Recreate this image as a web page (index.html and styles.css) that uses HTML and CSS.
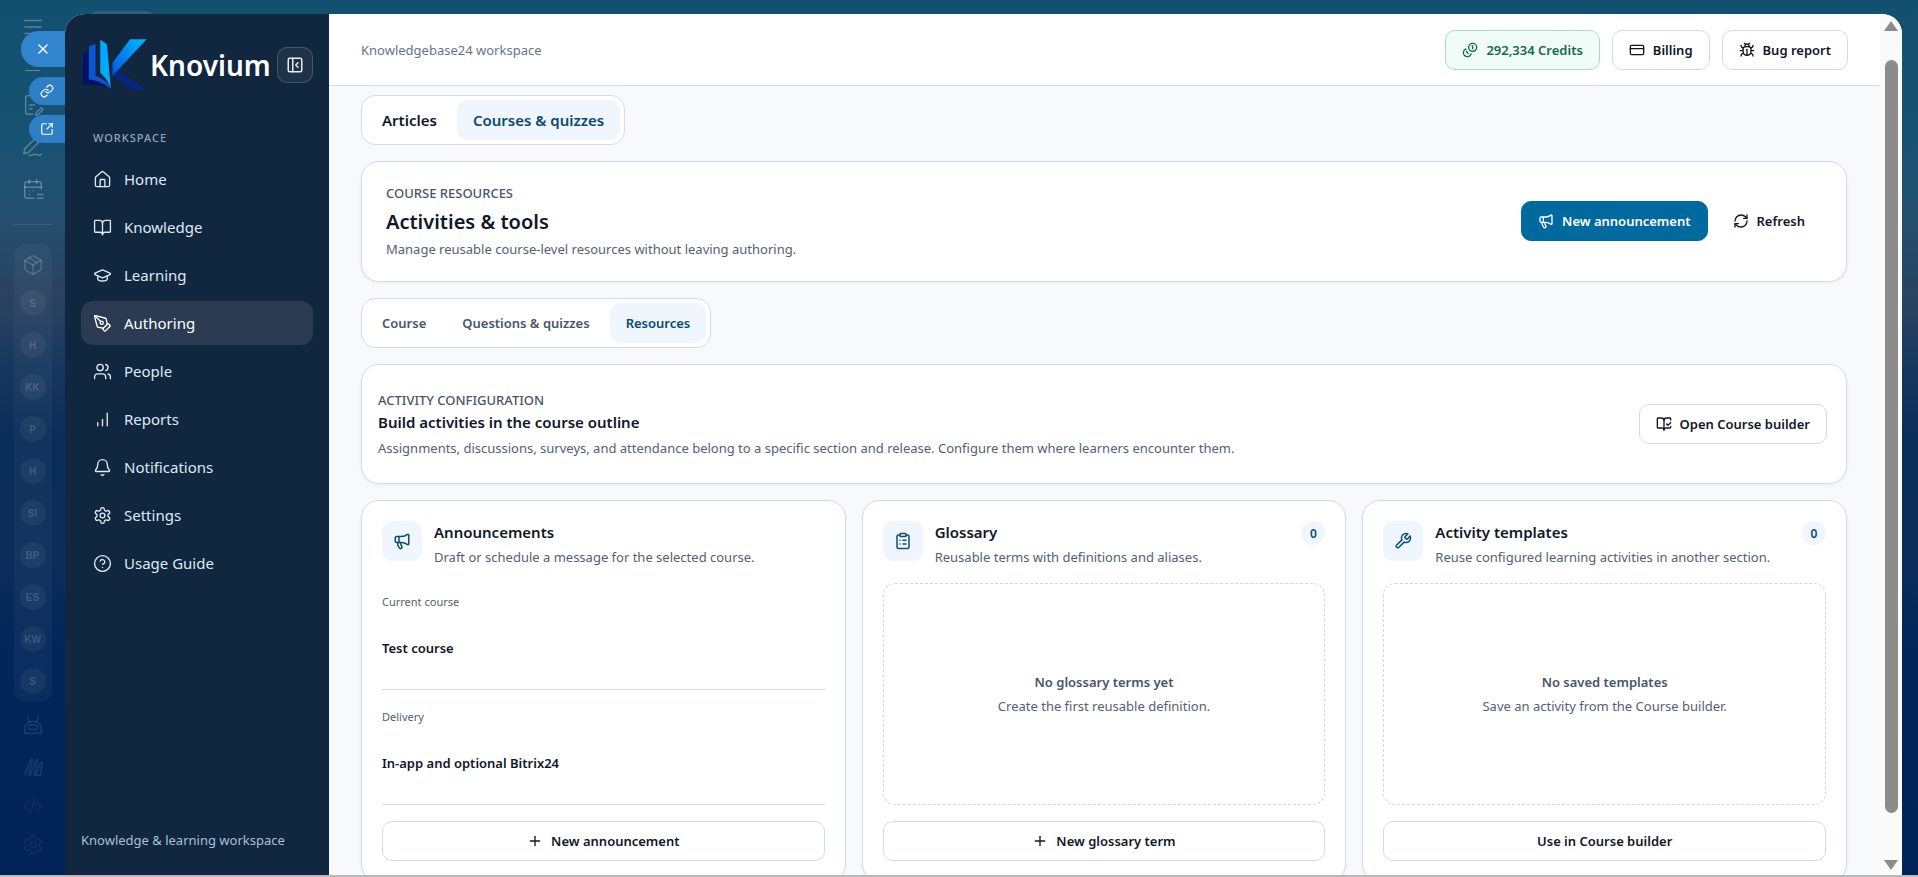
FILE: index.html
```html
<!DOCTYPE html>
<html lang="en">
  <head>
    <meta charset="UTF-8" />
    <meta name="viewport" content="width=device-width, initial-scale=1.0" />
    <title>Knovium - Activities &amp; tools</title>
    <link rel="stylesheet" href="styles.css">
  </head>
  <body>
    <!-- Icon sprite -->
    <svg class="sprite" xmlns="http://www.w3.org/2000/svg">
      <symbol id="i-home" viewBox="0 0 24 24"><path d="M15 21v-8a1 1 0 0 0-1-1h-4a1 1 0 0 0-1 1v8"/><path d="M3 10a2 2 0 0 1 .709-1.528l7-5.999a2 2 0 0 1 2.582 0l7 5.999A2 2 0 0 1 21 10v9a2 2 0 0 1-2 2H5a2 2 0 0 1-2-2z"/></symbol>
      <symbol id="i-book" viewBox="0 0 24 24"><path d="M12 7v14"/><path d="M3 18a1 1 0 0 1-1-1V4a1 1 0 0 1 1-1h5a4 4 0 0 1 4 4 4 4 0 0 1 4-4h5a1 1 0 0 1 1 1v13a1 1 0 0 1-1 1h-6a3 3 0 0 0-3 3 3 3 0 0 0-3-3z"/></symbol>
      <symbol id="i-cap" viewBox="0 0 24 24"><path d="M21.42 10.922a1 1 0 0 0-.019-1.838L12.83 5.18a2 2 0 0 0-1.66 0L2.6 9.08a1 1 0 0 0 0 1.832l8.57 3.908a2 2 0 0 0 1.66 0z"/><path d="M6 12.5V16a6 3 0 0 0 12 0v-3.5"/></symbol>
      <symbol id="i-pen" viewBox="0 0 24 24"><path d="M15.707 21.293a1 1 0 0 1-1.414 0l-1.586-1.586a1 1 0 0 1 0-1.414l5.586-5.586a1 1 0 0 1 1.414 0l1.586 1.586a1 1 0 0 1 0 1.414z"/><path d="m18 13-1.375-6.874a1 1 0 0 0-.746-.776L3.235 2.028a1 1 0 0 0-1.207 1.207L5.35 15.879a1 1 0 0 0 .776.746L13 18"/><path d="m2.3 2.3 7.286 7.286"/><circle cx="11" cy="11" r="2"/></symbol>
      <symbol id="i-users" viewBox="0 0 24 24"><path d="M16 21v-2a4 4 0 0 0-4-4H6a4 4 0 0 0-4 4v2"/><path d="M16 3.128a4 4 0 0 1 0 7.744"/><path d="M22 21v-2a4 4 0 0 0-3-3.87"/><circle cx="9" cy="7" r="4"/></symbol>
      <symbol id="i-bars" viewBox="0 0 24 24"><path d="M6 20v-4"/><path d="M12 20v-8"/><path d="M18 20V4"/></symbol>
      <symbol id="i-bell" viewBox="0 0 24 24"><path d="M10.268 21a2 2 0 0 0 3.464 0"/><path d="M3.262 15.326A1 1 0 0 0 4 17h16a1 1 0 0 0 .74-1.673C19.41 13.956 18 12.499 18 8A6 6 0 0 0 6 8c0 4.499-1.411 5.956-2.738 7.326"/></symbol>
      <symbol id="i-gear" viewBox="0 0 24 24"><path d="M12.22 2h-.44a2 2 0 0 0-2 2v.18a2 2 0 0 1-1 1.73l-.43.25a2 2 0 0 1-2 0l-.15-.08a2 2 0 0 0-2.73.73l-.22.38a2 2 0 0 0 .73 2.73l.15.1a2 2 0 0 1 1 1.72v.51a2 2 0 0 1-1 1.74l-.15.09a2 2 0 0 0-.73 2.73l.22.38a2 2 0 0 0 2.73.73l.15-.08a2 2 0 0 1 2 0l.43.25a2 2 0 0 1 1 1.73V20a2 2 0 0 0 2 2h.44a2 2 0 0 0 2-2v-.18a2 2 0 0 1 1-1.73l.43-.25a2 2 0 0 1 2 0l.15.08a2 2 0 0 0 2.73-.73l.22-.39a2 2 0 0 0-.73-2.73l-.15-.08a2 2 0 0 1-1-1.74v-.5a2 2 0 0 1 1-1.74l.15-.09a2 2 0 0 0 .73-2.73l-.22-.38a2 2 0 0 0-2.73-.73l-.15.08a2 2 0 0 1-2 0l-.43-.25a2 2 0 0 1-1-1.73V4a2 2 0 0 0-2-2z"/><circle cx="12" cy="12" r="3"/></symbol>
      <symbol id="i-help" viewBox="0 0 24 24"><circle cx="12" cy="12" r="10"/><path d="M9.09 9a3 3 0 0 1 5.83 1c0 2-3 3-3 3"/><path d="M12 17h.01"/></symbol>
      <symbol id="i-panel" viewBox="0 0 24 24"><rect width="18" height="18" x="3" y="3" rx="2"/><path d="M9 3v18"/><path d="m16 15-3-3 3-3"/></symbol>
      <symbol id="i-coins" viewBox="0 0 24 24"><circle cx="16" cy="8" r="6"/><path d="M5.91 10.37A6 6 0 1 0 13.66 18"/><path d="M15 6h1v4"/><path d="m7.29 13.88-.7.71 2.82 2.82"/></symbol>
      <symbol id="i-card" viewBox="0 0 24 24"><rect width="20" height="14" x="2" y="5" rx="2"/><path d="M2 10h20"/></symbol>
      <symbol id="i-bug" viewBox="0 0 24 24"><path d="m8 2 1.88 1.88"/><path d="M14.12 3.88 16 2"/><path d="M9 7.13v-1a3.003 3.003 0 1 1 6 0v1"/><path d="M12 20c-3.3 0-6-2.7-6-6v-3a4 4 0 0 1 4-4h4a4 4 0 0 1 4 4v3c0 3.3-2.7 6-6 6"/><path d="M12 20v-9"/><path d="M6.53 9C4.6 8.8 3 7.1 3 5"/><path d="M6 13H2"/><path d="M3 21c0-2.1 1.7-3.9 3.8-4"/><path d="M20.97 5c0 2.1-1.6 3.8-3.5 4"/><path d="M22 13h-4"/><path d="M17.2 17c2.1.1 3.8 1.9 3.8 4"/></symbol>
      <symbol id="i-mega" viewBox="0 0 24 24"><path d="M11 6a13 13 0 0 0 8.4-2.8A1 1 0 0 1 21 4v12a1 1 0 0 1-1.6.8A13 13 0 0 0 11 14H5a2 2 0 0 1-2-2V8a2 2 0 0 1 2-2z"/><path d="M6 14a12 12 0 0 0 2.4 7.2 2 2 0 0 0 3.2-2.4A8 8 0 0 1 10 14"/><path d="M8 6v8"/></symbol>
      <symbol id="i-refresh" viewBox="0 0 24 24"><path d="M3 12a9 9 0 0 1 9-9 9.75 9.75 0 0 1 6.74 2.74L21 8"/><path d="M21 3v5h-5"/><path d="M21 12a9 9 0 0 1-9 9 9.75 9.75 0 0 1-6.74-2.74L3 16"/><path d="M8 16H3v5"/></symbol>
      <symbol id="i-bookcheck" viewBox="0 0 24 24"><path d="M12 21V7"/><path d="m16 12 2 2 4-4"/><path d="M22 6V4a1 1 0 0 0-1-1h-5a4 4 0 0 0-4 4 4 4 0 0 0-4-4H3a1 1 0 0 0-1 1v13a1 1 0 0 0 1 1h6a3 3 0 0 1 3 3 3 3 0 0 1 3-3h6a1 1 0 0 0 1-1v-1.3"/></symbol>
      <symbol id="i-clip" viewBox="0 0 24 24"><rect width="8" height="4" x="8" y="2" rx="1"/><path d="M16 4h2a2 2 0 0 1 2 2v14a2 2 0 0 1-2 2H6a2 2 0 0 1-2-2V6a2 2 0 0 1 2-2h2"/><path d="M12 11h4"/><path d="M12 16h4"/><path d="M8 11h.01"/><path d="M8 16h.01"/></symbol>
      <symbol id="i-wrench" viewBox="0 0 24 24"><path d="M14.7 6.3a1 1 0 0 0 0 1.4l1.6 1.6a1 1 0 0 0 1.4 0l3.77-3.77a6 6 0 0 1-7.94 7.94l-6.91 6.91a2.12 2.12 0 0 1-3-3l6.91-6.91a6 6 0 0 1 7.94-7.94l-3.76 3.76z"/></symbol>
      <symbol id="i-plus" viewBox="0 0 24 24"><path d="M5 12h14"/><path d="M12 5v14"/></symbol>
      <symbol id="i-x" viewBox="0 0 24 24"><path d="M18 6 6 18"/><path d="m6 6 12 12"/></symbol>
      <symbol id="i-link" viewBox="0 0 24 24"><path d="M10 13a5 5 0 0 0 7.54.54l3-3a5 5 0 0 0-7.07-7.07l-1.72 1.71"/><path d="M14 11a5 5 0 0 0-7.54-.54l-3 3a5 5 0 0 0 7.07 7.07l1.71-1.71"/></symbol>
      <symbol id="i-open" viewBox="0 0 24 24"><path d="M21 13v6a2 2 0 0 1-2 2H5a2 2 0 0 1-2-2V5a2 2 0 0 1 2-2h6"/><path d="m21 3-9 9"/><path d="M15 3h6v6"/></symbol>
      <symbol id="i-menu" viewBox="0 0 24 24"><path d="M3 5h18"/><path d="M3 12h18"/><path d="M3 19h18"/></symbol>
      <symbol id="i-file" viewBox="0 0 24 24"><path d="M12 22H6a2 2 0 0 1-2-2V4a2 2 0 0 1 2-2h8l5 5v4"/><path d="M8 12h6"/><path d="M8 16h3"/><path d="m15 21 6-6 2 2-6 6h-2z"/></symbol>
      <symbol id="i-sign" viewBox="0 0 24 24"><path d="m14 3 4 4L7 18l-5 1 1-5z"/><path d="M8 21c3 1 4-2 7-1s3 2 6 0"/></symbol>
      <symbol id="i-cal" viewBox="0 0 24 24"><path d="M8 2v4"/><path d="M16 2v4"/><path d="M21 12V6a2 2 0 0 0-2-2H5a2 2 0 0 0-2 2v14a2 2 0 0 0 2 2h8"/><path d="M3 10h18"/><path d="M8 14h.01"/><path d="M12 14h.01"/><path d="M8 18h.01"/><path d="M17 18h6"/><path d="M17 22h6"/></symbol>
      <symbol id="i-box" viewBox="0 0 24 24"><path d="M21 8a2 2 0 0 0-1-1.73l-7-4a2 2 0 0 0-2 0l-7 4A2 2 0 0 0 3 8v8a2 2 0 0 0 1 1.73l7 4a2 2 0 0 0 2 0l7-4a2 2 0 0 0 1-1.73z"/><path d="m3.3 7 8.7 5 8.7-5"/><path d="M12 22V12"/><path d="m7.5 4.3 9 5.2"/></symbol>
      <symbol id="i-robot" viewBox="0 0 24 24"><path d="M6 3l2 5"/><path d="M18 3l-2 5"/><path d="M3 21v-5a9 8 0 0 1 18 0v5z"/><rect x="7" y="12" width="10" height="5" rx="2.5"/></symbol>
      <symbol id="i-brush" viewBox="0 0 24 24"><path d="M3 21 9 5c1-2 3-1 2 1L7 21"/><path d="M9 21l6-16c1-2 3-1 2 1l-4 15"/><path d="M15 21l5-13c1-2 2-1 2 1l-2 12z"/></symbol>
      <symbol id="i-code" viewBox="0 0 24 24"><path d="m8 8-5 5 5 5"/><path d="m16 8 5 5-5 5"/><path d="m14 4-4 16"/></symbol>
    </svg>

    <div class="stage">
      <!-- Desktop rail behind the window -->
      <div class="rail">
        <svg class="rail-icon rail-menu"><use href="#i-menu"/></svg>
        <div class="rail-line"></div>
        <svg class="rail-icon rail-file"><use href="#i-file"/></svg>
        <svg class="rail-icon"><use href="#i-sign"/></svg>
        <svg class="rail-icon"><use href="#i-cal"/></svg>
        <div class="rail-line rail-line-wide"></div>
        <div class="rail-group">
          <svg class="rail-icon"><use href="#i-box"/></svg>
          <span class="avatar">S</span>
          <span class="avatar">H</span>
          <span class="avatar">KK</span>
          <span class="avatar">P</span>
          <span class="avatar">H</span>
          <span class="avatar">SI</span>
          <span class="avatar">BP</span>
          <span class="avatar">ES</span>
          <span class="avatar">KW</span>
          <span class="avatar">S</span>
        </div>
        <svg class="rail-icon rail-dim"><use href="#i-robot"/></svg>
        <svg class="rail-icon rail-dim"><use href="#i-brush"/></svg>
        <svg class="rail-icon rail-dimmer"><use href="#i-code"/></svg>
        <svg class="rail-icon rail-dimmer"><use href="#i-gear"/></svg>
      </div>

      <!-- Floating widget buttons -->
      <div class="float-btn float-close"><svg class="icon icon-white"><use href="#i-x"/></svg></div>
      <div class="float-btn float-link"><svg class="icon icon-white"><use href="#i-link"/></svg></div>
      <div class="float-btn float-open"><svg class="icon icon-white"><use href="#i-open"/></svg></div>
      <div class="peek-tab"></div>

      <div class="window">
        <!-- Sidebar -->
        <aside class="sidebar">
          <div class="brand">
            <svg class="logo" viewBox="20 28 196 154">
              <defs>
                <linearGradient id="kArm" x1="1" y1="0" x2="0" y2="1">
                  <stop offset="0" stop-color="#00bbff" />
                  <stop offset="1" stop-color="#0057e0" />
                </linearGradient>
              </defs>
              <path fill="#05106b" d="M23 70l15-4v84c20 4 45 10 67 28-25-10-55-13-82-13z" />
              <path fill="#0a56d6" d="M41 50l20-7v97c20 6 38 20 46 38-18-16-42-26-66-28z" />
              <path fill="#00aaff" d="M75 30l20 14c4 40 8 90 12 134-6-20-18-36-32-48z" />
              <path fill="url(#kArm)" d="M112 100l53-71h50L112 140z" />
              <path fill="#07277f" d="M127 122l88 59h-43l-60-41z" />
            </svg>
            <span class="brand-name">Knovium</span>
            <div class="collapse-btn"><svg class="icon"><use href="#i-panel"/></svg></div>
          </div>

          <div class="nav-label">WORKSPACE</div>
          <nav class="nav">
            <a class="nav-item"><svg class="nav-icon"><use href="#i-home"/></svg>Home</a>
            <a class="nav-item"><svg class="nav-icon"><use href="#i-book"/></svg>Knowledge</a>
            <a class="nav-item"><svg class="nav-icon"><use href="#i-cap"/></svg>Learning</a>
            <a class="nav-item active"><svg class="nav-icon"><use href="#i-pen"/></svg>Authoring</a>
            <a class="nav-item"><svg class="nav-icon"><use href="#i-users"/></svg>People</a>
            <a class="nav-item"><svg class="nav-icon"><use href="#i-bars"/></svg>Reports</a>
            <a class="nav-item"><svg class="nav-icon"><use href="#i-bell"/></svg>Notifications</a>
            <a class="nav-item"><svg class="nav-icon"><use href="#i-gear"/></svg>Settings</a>
            <a class="nav-item"><svg class="nav-icon"><use href="#i-help"/></svg>Usage Guide</a>
          </nav>
          <div class="sidebar-foot">Knowledge &amp; learning workspace</div>
        </aside>

        <!-- Main column -->
        <main class="main">
          <header class="topbar">
            <span class="workspace-name">Knowledgebase24 workspace</span>
            <div class="topbar-actions">
              <button class="btn btn-credits"><svg class="icon"><use href="#i-coins"/></svg>292,334 Credits</button>
              <button class="btn"><svg class="icon"><use href="#i-card"/></svg>Billing</button>
              <button class="btn"><svg class="icon"><use href="#i-bug"/></svg>Bug report</button>
            </div>
          </header>

          <div class="content">
            <div class="tabs tabs-large">
              <span class="tab strong">Articles</span>
              <span class="tab active">Courses &amp; quizzes</span>
            </div>

            <section class="panel hero">
              <div>
                <div class="eyebrow">COURSE RESOURCES</div>
                <h1 class="hero-title">Activities &amp; tools</h1>
                <p class="muted hero-sub">Manage reusable course-level resources without leaving authoring.</p>
              </div>
              <div class="hero-actions">
                <button class="btn btn-primary"><svg class="icon"><use href="#i-mega"/></svg>New announcement</button>
                <button class="btn btn-ghost"><svg class="icon"><use href="#i-refresh"/></svg>Refresh</button>
              </div>
            </section>

            <div class="tabs">
              <span class="tab">Course</span>
              <span class="tab">Questions &amp; quizzes</span>
              <span class="tab active">Resources</span>
            </div>

            <section class="panel config">
              <div>
                <div class="eyebrow">ACTIVITY CONFIGURATION</div>
                <h2 class="config-title">Build activities in the course outline</h2>
                <p class="muted config-sub">Assignments, discussions, surveys, and attendance belong to a specific section and release. Configure them where learners encounter them.</p>
              </div>
              <button class="btn"><svg class="icon"><use href="#i-bookcheck"/></svg>Open Course builder</button>
            </section>

            <div class="card-grid">
              <section class="panel card">
                <div class="card-head">
                  <div class="card-icon"><svg class="icon icon-tile"><use href="#i-mega"/></svg></div>
                  <div>
                    <h3 class="card-title">Announcements</h3>
                    <p class="muted card-sub">Draft or schedule a message for the selected course.</p>
                  </div>
                </div>
                <div class="field">
                  <div class="field-label">Current course</div>
                  <div class="field-value">Test course</div>
                </div>
                <div class="field">
                  <div class="field-label">Delivery</div>
                  <div class="field-value">In-app and optional Bitrix24</div>
                </div>
                <button class="btn btn-wide"><svg class="icon"><use href="#i-plus"/></svg>New announcement</button>
              </section>

              <section class="panel card">
                <div class="card-head">
                  <div class="card-icon"><svg class="icon icon-tile"><use href="#i-clip"/></svg></div>
                  <div>
                    <h3 class="card-title">Glossary</h3>
                    <p class="muted card-sub">Reusable terms with definitions and aliases.</p>
                  </div>
                  <span class="count">0</span>
                </div>
                <div class="empty">
                  <strong>No glossary terms yet</strong>
                  <span>Create the first reusable definition.</span>
                </div>
                <button class="btn btn-wide"><svg class="icon"><use href="#i-plus"/></svg>New glossary term</button>
              </section>

              <section class="panel card">
                <div class="card-head">
                  <div class="card-icon"><svg class="icon icon-tile"><use href="#i-wrench"/></svg></div>
                  <div>
                    <h3 class="card-title">Activity templates</h3>
                    <p class="muted card-sub">Reuse configured learning activities in another section.</p>
                  </div>
                  <span class="count">0</span>
                </div>
                <div class="empty">
                  <strong>No saved templates</strong>
                  <span>Save an activity from the Course builder.</span>
                </div>
                <button class="btn btn-wide">Use in Course builder</button>
              </section>
            </div>
          </div>
        </main>

        <!-- Page scrollbar -->
        <div class="scrollbar">
          <span class="arrow arrow-up"></span>
          <span class="thumb"></span>
          <span class="arrow arrow-down"></span>
        </div>
      </div>
    </div>
    <div class="screen-edge"></div>
  </body>
</html>
```

FILE: styles.css
```css
* {
  box-sizing: border-box;
}

html,
body {
  height: 100%;
}

body {
  margin: 0;
  display: flex;
  flex-direction: column;
  overflow: hidden;
  font-family: "Noto Sans", "Open Sans", sans-serif;
  font-size: 13px;
  color: #0f172a;
}

h1,
h2,
h3,
p {
  margin: 0;
}

.sprite {
  display: none;
}

svg {
  fill: none;
  stroke: currentColor;
  stroke-width: 2;
  stroke-linecap: round;
  stroke-linejoin: round;
  flex-shrink: 0;
}

.icon {
  width: 16px;
  height: 16px;
}

.icon-white {
  color: #fff;
}

.stage {
  position: relative;
  flex: 1;
  min-height: 0;
  display: flex;
  padding-top: 14px;
  background: linear-gradient(
    180deg,
    #13506f 0,
    #175272 140px,
    #24506f 210px,
    #2a4261 300px,
    #1b3a60 350px,
    #0a2c58 440px,
    #0c2d5a 560px,
    #03265a 650px,
    #012358 875px
  );
}

.screen-edge {
  height: 2px;
  background: #b8b8b8;
}

/* Left rail */
.rail {
  width: 65px;
  margin-top: -14px;
  display: flex;
  flex-direction: column;
  align-items: center;
  color: rgba(215, 225, 240, 0.34);
  flex-shrink: 0;
}

.rail-icon {
  width: 22px;
  height: 22px;
  margin: 10px 0;
  stroke-width: 1.6;
}

.rail-menu {
  margin: 16px 0 0;
}

.rail-line {
  width: 15px;
  height: 1px;
  margin-top: 32px;
  background: rgba(215, 225, 240, 0.4);
}

.rail-file {
  margin-top: 23px;
}

.rail-line-wide {
  width: 38px;
  margin: 14px 0 0;
  background: rgba(215, 225, 240, 0.12);
}

.rail-group {
  width: 38px;
  margin-top: 19px;
  padding-bottom: 8px;
  display: flex;
  flex-direction: column;
  align-items: center;
  gap: 16px;
  border-radius: 12px;
  background: rgba(255, 255, 255, 0.035);
}

.rail-group .rail-icon {
  margin: 10px 0 -2px;
  color: rgba(215, 225, 240, 0.22);
}

.avatar {
  width: 26px;
  height: 26px;
  display: flex;
  align-items: center;
  justify-content: center;
  border-radius: 50%;
  background: rgba(255, 255, 255, 0.05);
  font-family: "Liberation Sans", sans-serif;
  font-size: 10px;
  font-weight: 700;
  color: rgba(215, 225, 240, 0.2);
}

.rail-dim {
  margin: 12px 0 8px;
  color: rgba(120, 160, 215, 0.2);
}

.rail-dimmer {
  margin: 8px 0 10px;
  color: rgba(120, 160, 215, 0.1);
}

.float-btn {
  position: absolute;
  right: calc(100% - 65px);
  display: flex;
  align-items: center;
  justify-content: flex-start;
  background: #3185cf;
  border-radius: 18px 0 0 18px;
  z-index: 2;
}

.float-close {
  top: 31px;
  width: 44px;
  height: 36px;
  padding-left: 14px;
}

.float-link,
.float-open {
  width: 36px;
  height: 28px;
  padding-left: 11px;
  border-radius: 14px 0 0 14px;
  background: #2f7fc6;
}

.float-link {
  top: 77px;
}

.float-open {
  top: 115px;
}

.float-link .icon,
.float-open .icon {
  width: 14px;
  height: 14px;
}

.peek-tab {
  position: absolute;
  left: 88px;
  top: 11px;
  width: 68px;
  height: 12px;
  border-radius: 10px 10px 0 0;
  background: rgba(255, 255, 255, 0.1);
}

/* Window */
.window {
  flex: 1;
  min-width: 0;
  margin-right: 16px;
  display: flex;
  position: relative;
  z-index: 1;
  overflow: hidden;
  border-radius: 20px 20px 0 0;
  background: #f7f9fd;
}

.sidebar {
  width: 264px;
  padding: 25px 16px 26px;
  display: flex;
  flex-direction: column;
  flex-shrink: 0;
  background: #11263f;
}

.brand {
  display: flex;
  align-items: center;
  height: 51px;
}

.logo {
  width: 65px;
  height: 51px;
  margin-left: 1px;
  stroke: none;
}

.brand-name {
  margin-left: 3px;
  font-size: 28px;
  font-weight: 600;
  color: #fff;
  line-height: 1;
}

.collapse-btn {
  width: 36px;
  height: 36px;
  margin-left: auto;
  display: flex;
  align-items: center;
  justify-content: center;
  border: 1px solid rgba(255, 255, 255, 0.18);
  border-radius: 10px;
  background: rgba(255, 255, 255, 0.06);
  color: #e8eef6;
}

.collapse-btn .icon {
  width: 18px;
  height: 18px;
}

.nav-label {
  margin: 40px 0 11px 12px;
  font-size: 11px;
  line-height: 16px;
  font-weight: 500;
  letter-spacing: 1px;
  color: #93a7bd;
}

.nav {
  display: flex;
  flex-direction: column;
  gap: 4px;
}

.nav-item {
  height: 44px;
  padding: 0 12px;
  display: flex;
  align-items: center;
  gap: 12px;
  border-radius: 12px;
  font-size: 15px;
  color: #dfe9f4;
}

.nav-item.active {
  background: #2b3b52;
  color: #fff;
}

.nav-icon {
  width: 19px;
  height: 19px;
  stroke-width: 1.7;
}

.sidebar-foot {
  margin-top: auto;
  line-height: 18px;
  color: #a5c2d8;
}

.main {
  flex: 1;
  min-width: 0;
  display: flex;
  flex-direction: column;
}

.topbar {
  height: 72px;
  padding: 0 32px;
  display: flex;
  align-items: center;
  justify-content: space-between;
  flex-shrink: 0;
  background: #fff;
  border-bottom: 1px solid #d5dcea;
}

.workspace-name {
  color: #64748b;
}

.topbar-actions {
  display: flex;
  gap: 12px;
}

.btn {
  height: 40px;
  padding: 0 16px;
  display: inline-flex;
  align-items: center;
  justify-content: center;
  gap: 8px;
  border: 1px solid #d3dbe9;
  border-radius: 10px;
  background: #fff;
  font: inherit;
  font-weight: 600;
  color: #0f172a;
}

.btn-credits {
  background: #effcf8;
  border-color: #a9dcc9;
  color: #166a50;
}

.btn-primary {
  background: #006a9e;
  border-color: #006a9e;
  color: #fff;
}

.btn-ghost {
  background: transparent;
  border-color: transparent;
}

.btn-wide {
  width: 100%;
  margin-top: 16px;
}

.content {
  flex: 1;
  min-height: 0;
  padding: 9px 33px 0 32px;
  display: flex;
  flex-direction: column;
  align-items: flex-start;
  gap: 16px;
  overflow: hidden;
}

.tabs {
  height: 50px;
  padding: 4px;
  display: flex;
  gap: 4px;
  border: 1px solid #d3dbe9;
  border-radius: 14px;
  background: #fff;
  flex-shrink: 0;
}

.tab {
  height: 40px;
  padding: 0 16px;
  display: flex;
  align-items: center;
  border-radius: 10px;
  font-weight: 600;
  color: #475569;
}

.tabs-large .tab {
  font-size: 15px;
}

.tab.strong {
  color: #0f172a;
}

.tab.active {
  background: #eff6fd;
  color: #0b4a6f;
}

.panel {
  border: 1px solid #d3dbe9;
  border-radius: 18px;
  background: #fff;
  box-shadow: 0 1px 3px rgba(15, 23, 42, 0.06);
}

.hero,
.config {
  width: 100%;
  display: flex;
  align-items: center;
  justify-content: space-between;
  flex-shrink: 0;
}

.hero {
  padding: 22px 24px 23px;
}

.hero-actions {
  display: flex;
  gap: 8px;
}

.eyebrow {
  line-height: 18px;
  font-weight: 500;
  color: #475569;
}

.hero-title {
  margin-top: 6px;
  font-size: 20px;
  line-height: 28px;
  font-weight: 600;
}

.muted {
  line-height: 18px;
  color: #526175;
}

.hero-sub {
  margin-top: 4px;
}

.config {
  padding: 26px 19px 26px 16px;
}

.config-title {
  margin-top: 2px;
  font-size: 15px;
  line-height: 22px;
  font-weight: 600;
}

.config-sub {
  margin-top: 6px;
}

.card-grid {
  width: 100%;
  display: grid;
  grid-template-columns: repeat(3, 1fr);
  gap: 16px;
  flex-shrink: 0;
}

.card {
  padding: 20px 20px 20px;
}

.card-head {
  display: flex;
  gap: 12px;
  margin-bottom: 9px;
}

.card-icon {
  width: 40px;
  height: 40px;
  display: flex;
  align-items: center;
  justify-content: center;
  border-radius: 10px;
  background: #eff6fd;
  flex-shrink: 0;
}

.icon-tile {
  width: 18px;
  height: 18px;
  color: #0b4f75;
}

.card-title {
  font-size: 15px;
  line-height: 22px;
  font-weight: 600;
}

.card-sub {
  margin-top: 5px;
}

.count {
  width: 24px;
  height: 24px;
  margin-left: auto;
  display: flex;
  align-items: center;
  justify-content: center;
  border-radius: 50%;
  background: #eff6fd;
  font-size: 12px;
  font-weight: 600;
  color: #0b4a6f;
  flex-shrink: 0;
}

.field {
  height: 115px;
  padding-top: 18px;
  border-bottom: 1px solid #d3dbe9;
}

.field-label {
  font-size: 11px;
  line-height: 18px;
  color: #526175;
}

.field-value {
  margin-top: 28px;
  line-height: 18px;
  font-weight: 600;
}

.empty {
  height: 222px;
  margin-top: 17px;
  display: flex;
  flex-direction: column;
  align-items: center;
  justify-content: center;
  gap: 6px;
  line-height: 18px;
  border: 1px dashed #cfd7e5;
  border-radius: 12px;
  color: #526175;
}

.empty strong {
  font-weight: 600;
  color: #475569;
}

/* Scrollbar */
.scrollbar {
  width: 22px;
  position: relative;
  flex-shrink: 0;
  background: #fafafa;
}

.thumb {
  position: absolute;
  left: 5px;
  top: 46px;
  width: 13px;
  height: 753px;
  border-radius: 7px;
  background: #8c8c8c;
}

.arrow {
  position: absolute;
  left: 4px;
  width: 0;
  height: 0;
  border-left: 7.5px solid transparent;
  border-right: 7.5px solid transparent;
}

.arrow-up {
  top: 7px;
  border-bottom: 10px solid #8c8c8c;
}

.arrow-down {
  bottom: 5px;
  border-top: 10px solid #8c8c8c;
}
```
